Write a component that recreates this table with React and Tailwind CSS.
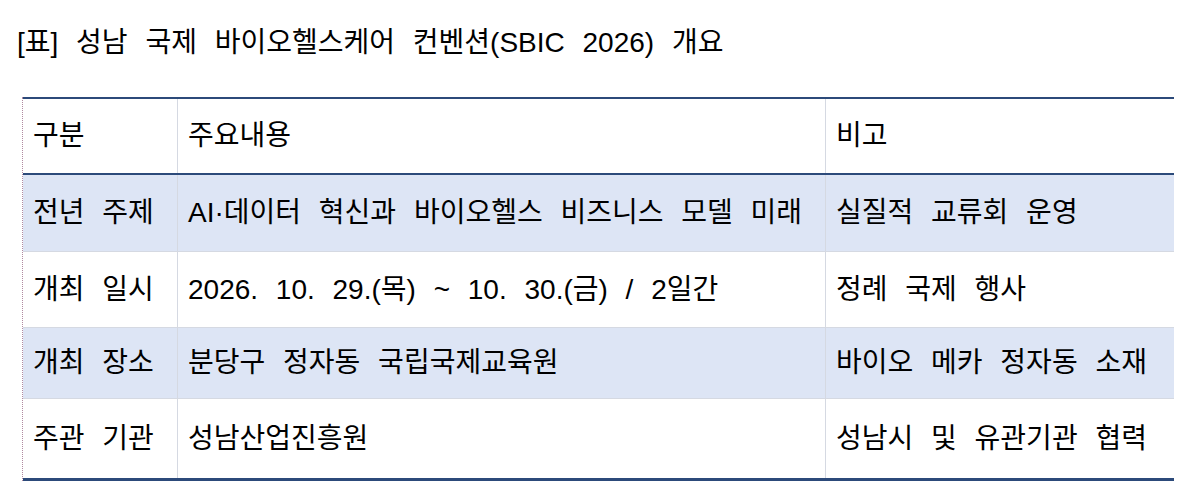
export default function App() {
  const font = { fontFamily: '"Liberation Sans", "Noto Sans CJK KR", sans-serif' };
  const rows = [
    { a: "전년 주제", b: "AI·데이터 혁신과 바이오헬스 비즈니스 모델 미래", c: "실질적 교류회 운영", bg: "bg-[#dde5f5]", h: "h-[77px]" },
    { a: "개최 일시", b: "2026. 10. 29.(목) ~ 10. 30.(금) / 2일간", c: "정례 국제 행사", bg: "bg-white", h: "h-[76px]" },
    { a: "개최 장소", b: "분당구 정자동 국립국제교육원", c: "바이오 메카 정자동 소재", bg: "bg-[#dde5f5]", h: "h-[71px]" },
    { a: "주관 기관", b: "성남산업진흥원", c: "성남시 및 유관기관 협력", bg: "bg-white", h: "h-[82px]" },
  ];
  return (
    <div className="w-[1189px] h-[504px] bg-white text-black" style={font}>
      <div className="pl-[17px] pt-[26px] h-[97px] text-[28px] leading-[34px] [word-spacing:10px] whitespace-nowrap">
        [표] 성남 국제 바이오헬스케어 컨벤션(SBIC 2026) 개요
      </div>
      <div className="ml-[22px] w-[1152px] border-l border-dotted border-l-[#b08aa0] text-[28px] [word-spacing:10px]">
        <div className="flex h-[78px] border-t-2 border-b-2 border-[#2c4a7a] bg-white">
          <div className="w-[155px] flex items-center pl-[10px] border-r border-[#d5d9e2]">구분</div>
          <div className="w-[648px] flex items-center pl-[10px] border-r border-[#d5d9e2]">주요내용</div>
          <div className="flex-1 flex items-center pl-[10px]">비고</div>
        </div>
        {rows.map((r, i) => (
          <div
            key={i}
            className={`flex ${r.h} ${r.bg} ${i < rows.length - 1 ? "border-b border-[#d5d9e2]" : "border-b-[3px] border-[#2c4a7a]"}`}
          >
            <div className="w-[155px] flex items-center pl-[10px] border-r border-[#d5d9e2] whitespace-nowrap">{r.a}</div>
            <div className="w-[648px] flex items-center pl-[10px] border-r border-[#d5d9e2] whitespace-nowrap">{r.b}</div>
            <div className="flex-1 flex items-center pl-[10px] whitespace-nowrap">{r.c}</div>
          </div>
        ))}
      </div>
    </div>
  );
}
